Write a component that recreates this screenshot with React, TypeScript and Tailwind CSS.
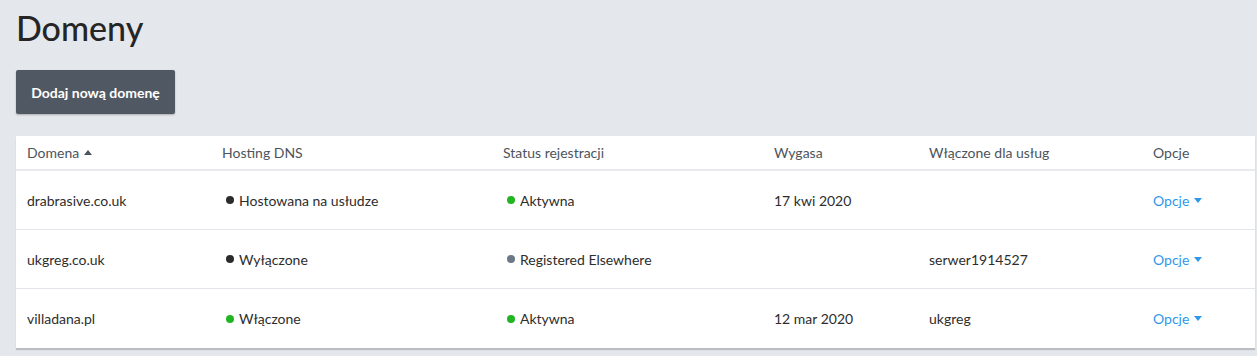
const rows = [
  { domain: 'drabrasive.co.uk', dns: 'Hostowana na usłudze', dnsDot: 'bg-[#2b2b2b]', status: 'Aktywna', statusDot: 'bg-[#22b522]', expires: '17 kwi 2020', services: '' },
  { domain: 'ukgreg.co.uk', dns: 'Wyłączone', dnsDot: 'bg-[#2b2b2b]', status: 'Registered Elsewhere', statusDot: 'bg-[#6b7886]', expires: '', services: 'serwer1914527' },
  { domain: 'villadana.pl', dns: 'Włączone', dnsDot: 'bg-[#22b522]', status: 'Aktywna', statusDot: 'bg-[#22b522]', expires: '12 mar 2020', services: 'ukgreg' },
];

function Dot({ color }: { color: string }) {
  return <span className={`inline-block w-2 h-2 rounded-full mr-[5px] ${color}`} />;
}

export default function App() {
  return (
    <div className="w-[1257px] h-[356px] bg-[#e4e7eb] overflow-hidden text-[#2d2d2d]" style={{ fontFamily: 'Lato, "Open Sans", sans-serif' }}>
      {/* Header */}
      <h1 className="pl-4 pt-[6px] text-[34px] leading-[44px] font-medium text-[#252525]">Domeny</h1>
      <button className="ml-4 mt-[20px] h-[44px] w-[159px] rounded-[2px] bg-[#505863] text-white text-[14px] font-bold shadow-[0_1px_2px_rgba(0,0,0,0.25)]">
        Dodaj nową domenę
      </button>

      {/* Table */}
      <div className="ml-4 mr-[2px] mt-[22px] bg-white shadow-[0_2px_1px_rgba(0,0,0,0.18)]">
        <div className="grid grid-cols-[195px_281px_271px_155px_224px_1fr] h-[35px] items-center border-b-2 border-[#e7e9ec] text-[14px] text-[#4d545c] pl-[11px]">
          <div className="flex items-center">
            Domena
            <svg width="8" height="5" viewBox="0 0 8 5" className="ml-[5px] fill-[#4d545c]"><path d="M0 5 L4 0 L8 5 Z" /></svg>
          </div>
          <div>Hosting DNS</div>
          <div>Status rejestracji</div>
          <div>Wygasa</div>
          <div>Włączone dla usług</div>
          <div>Opcje</div>
        </div>
        {rows.map((r, i) => (
          <div
            key={r.domain}
            className={`grid grid-cols-[195px_281px_271px_155px_224px_1fr] h-[59px] items-center text-[14px] pl-[11px] ${i < rows.length - 1 ? 'border-b border-[#e2e5e9]' : ''}`}
          >
            <div>{r.domain}</div>
            <div className="flex items-center pl-[4px]">
              <Dot color={r.dnsDot} />
              {r.dns}
            </div>
            <div className="flex items-center pl-[4px]">
              <Dot color={r.statusDot} />
              {r.status}
            </div>
            <div>{r.expires}</div>
            <div>{r.services}</div>
            <div className="flex items-center text-[#2f98ec]">
              Opcje
              <svg width="8" height="5" viewBox="0 0 8 5" className="ml-[5px] fill-[#2f98ec]"><path d="M0 0 L8 0 L4 5 Z" /></svg>
            </div>
          </div>
        ))}
      </div>
    </div>
  );
}
